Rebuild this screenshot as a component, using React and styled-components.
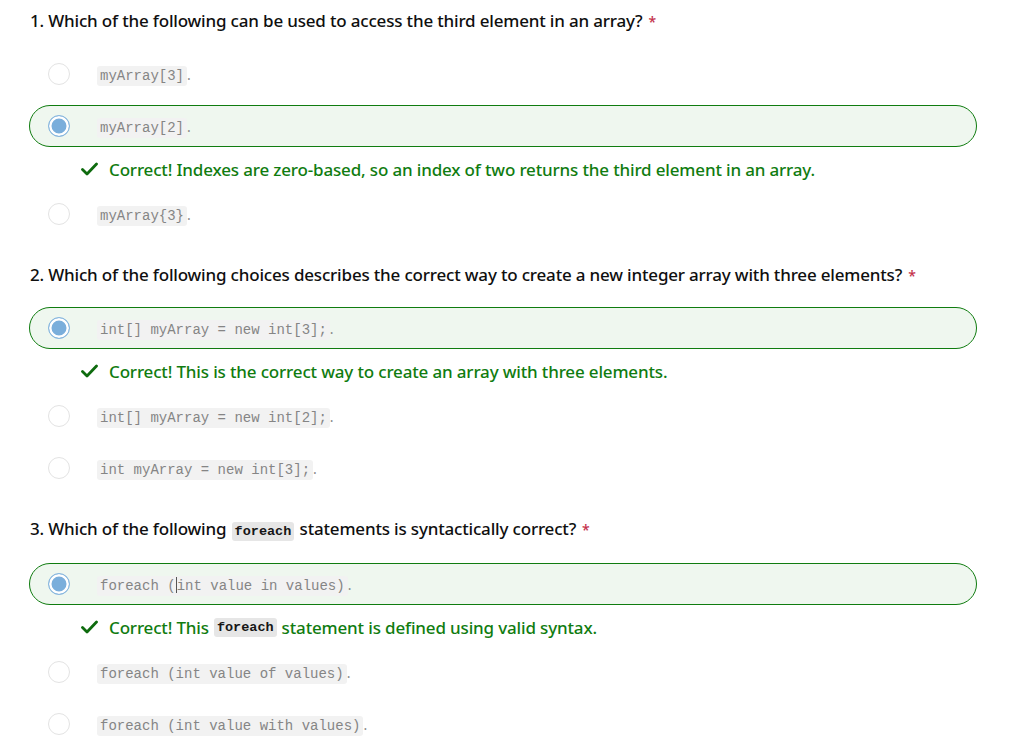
import styled, { createGlobalStyle } from 'styled-components';

const GlobalStyle = createGlobalStyle`
  body {
    margin: 0;
    background: #ffffff;
    font-family: "Noto Sans", "Open Sans", sans-serif;
    color: #111111;
  }
`;

const Page = styled.div`
  padding: 8px 35px 0 29px;
`;

const Question = styled.section`
  margin-bottom: 27px;
`;

const Title = styled.h3`
  margin: 0 0 18px 1px;
  font-size: 17px;
  font-weight: 500;
  letter-spacing: -0.18px;
  line-height: 26px;
  color: #0f0f0f;

  & .req {
    color: #c4314b;
    font-size: 14px;
    margin-left: 6px;
  }

  & code {
    margin: 0 1px;
  }
`;

const Options = styled.div`
  display: flex;
  flex-direction: column;
  gap: 10px;
`;

const Option = styled.label`
  display: flex;
  align-items: center;
  height: 42px;
  box-sizing: border-box;
  padding-left: 18px;
  border: 1px solid ${(p) => (p.$selected ? '#107c10' : 'transparent')};
  border-radius: 21px;
  background: ${(p) => (p.$selected ? '#eff7ef' : 'transparent')};
`;

const Radio = styled.span`
  width: 22px;
  height: 22px;
  box-sizing: border-box;
  border-radius: 50%;
  flex-shrink: 0;
  border: 1.5px solid ${(p) => (p.$checked ? '#8ab8df' : '#e3e3e3')};
  background: ${(p) => (p.$checked ? '#7aaedb' : '#ffffff')};
  box-shadow: ${(p) => (p.$checked ? 'inset 0 0 0 2.5px #ffffff' : 'none')};
`;

const OptionText = styled.span`
  margin-left: 27px;
  color: #8a8a8a;
  font-size: 14px;
`;

const Code = styled.code`
  font-family: "Liberation Mono", "DejaVu Sans Mono", monospace;
  font-size: ${(p) => (p.$strong ? '13.5px' : '14px')};
  letter-spacing: 0;
  background: ${(p) => (p.$strong ? '#e6e6e6' : '#f2f2f2')};
  color: ${(p) => (p.$strong ? '#161616' : '#858585')};
  font-weight: ${(p) => (p.$strong ? 700 : 400)};
  padding: 2px 3px;
  border-radius: 3px;
`;

const Caret = styled.span`
  display: inline-block;
  width: 1px;
  height: 16px;
  background: #555;
  vertical-align: -3px;
`;

const Feedback = styled.div`
  display: flex;
  align-items: center;
  height: 28px;
  margin-top: 8px;
  padding-left: 52px;
  color: #107c10;
  font-size: 17px;
  font-weight: 500;
  letter-spacing: -0.16px;

  & svg {
    margin-right: 11px;
    flex-shrink: 0;
  }

  & code {
    margin: 0 5px;
  }
`;

const Check = () => (
  <svg width="17" height="14" viewBox="0 0 17 14">
    <path d="M1.5 7.5 L6 12 L15.5 2" fill="none" stroke="#0e6b0e" strokeWidth="2.8" strokeLinecap="round" strokeLinejoin="round" />
  </svg>
);

const questions = [
  {
    title: <>1. Which of the following can be used to access the third element in an array?</>,
    options: ['myArray[3]', 'myArray[2]', 'myArray{3}'],
    correct: 1,
    feedback: <>Correct! Indexes are zero-based, so an index of two returns the third element in an array.</>,
  },
  {
    title: <>2. Which of the following choices describes the correct way to create a new integer array with three elements?</>,
    options: ['int[] myArray = new int[3];', 'int[] myArray = new int[2];', 'int myArray = new int[3];'],
    correct: 0,
    feedback: <>Correct! This is the correct way to create an array with three elements.</>,
  },
  {
    title: <>3. Which of the following <Code $strong>foreach</Code> statements is syntactically correct?</>,
    options: [
      <>foreach (<Caret />int value in values)</>,
      'foreach (int value of values)',
      'foreach (int value with values)',
    ],
    correct: 0,
    feedback: <>Correct! This<Code $strong>foreach</Code>statement is defined using valid syntax.</>,
  },
];

export default function App() {
  return (
    <Page>
      <GlobalStyle />
      {questions.map((q, qi) => (
        <Question key={qi}>
          <Title>
            {q.title}
            <span className="req">*</span>
          </Title>
          <Options>
            {q.options.map((opt, oi) => {
              const selected = oi === q.correct;
              return (
                <div key={oi}>
                  <Option $selected={selected}>
                    <Radio $checked={selected} />
                    <OptionText>
                      <Code>{opt}</Code>.
                    </OptionText>
                  </Option>
                  {selected && (
                    <Feedback>
                      <Check />
                      {q.feedback}
                    </Feedback>
                  )}
                </div>
              );
            })}
          </Options>
        </Question>
      ))}
    </Page>
  );
}
